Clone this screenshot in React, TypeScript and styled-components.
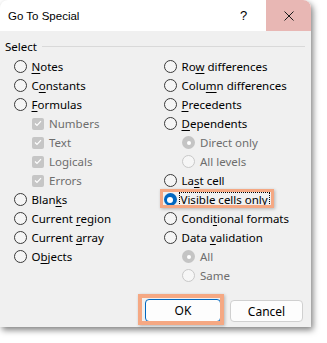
import React from "react";
import styled, { createGlobalStyle, css } from "styled-components";

const GlobalStyle = createGlobalStyle`
  html, body {
    margin: 0;
    padding: 0;
    background: #ffffff;
  }
  body {
    font-family: "Noto Sans", "Liberation Sans", Arial, sans-serif;
    font-size: 11.5px;
    color: #000;
  }
`;

const Page = styled.div`
  width: 327px;
  height: 343px;
  overflow: hidden;
`;

const Frame = styled.div`
  width: 311px;
  height: 327px;
  background: #f0f0f0;
  border-radius: 8px 8px 0 0;
  box-shadow: 2px 3px 6px rgba(0, 0, 0, 0.5);
  display: flex;
  flex-direction: column;
  position: relative;
`;

const TitleBar = styled.div`
  height: 31px;
  background: #ffffff;
  display: flex;
  align-items: stretch;
  border-radius: 8px 8px 0 0;
  flex-shrink: 0;
`;

const Title = styled.div`
  flex: 1;
  display: flex;
  align-items: center;
  padding-left: 8px;
  font-family: "Liberation Sans", Arial, sans-serif;
  font-size: 11.5px;
`;

const TitleButton = styled.div<{ $close?: boolean }>`
  width: 45px;
  display: flex;
  align-items: center;
  justify-content: center;
  font-family: "Liberation Sans", Arial, sans-serif;
  font-size: 13px;
  ${(p) =>
    p.$close &&
    css`
      background: #e8b7b4;
      border-top-right-radius: 8px;
    `}
`;

const Body = styled.div`
  flex: 1;
  display: flex;
  flex-direction: column;
  padding: 8px 6px 5px 5px;
`;

const GroupHeader = styled.div`
  height: 14px;
  display: flex;
  align-items: center;
  gap: 5px;
`;

const GroupLine = styled.div`
  flex: 1;
  height: 1px;
  background: #d9d9d9;
`;

const Columns = styled.div`
  margin-top: 4px;
  padding-left: 8.5px;
  display: grid;
  grid-template-columns: 150px 1fr;
`;

const Column = styled.div`
  display: flex;
  flex-direction: column;
`;

const Row = styled.div<{ $indent?: number }>`
  height: 19px;
  display: flex;
  align-items: center;
  gap: 5px;
  padding-left: ${(p) => p.$indent ?? 0}px;
`;

type RadioState = "off" | "on" | "disabledOn" | "disabledOff";

const RadioCircle = styled.span<{ $state: RadioState }>`
  box-sizing: border-box;
  width: 13px;
  height: 13px;
  border-radius: 50%;
  flex-shrink: 0;
  position: relative;
  ${(p) => {
    switch (p.$state) {
      case "on":
        return css`
          background: #0067c0;
          &::after {
            content: "";
            position: absolute;
            left: 3.5px;
            top: 3.5px;
            width: 6px;
            height: 6px;
            border-radius: 50%;
            background: #fff;
          }
        `;
      case "disabledOn":
        return css`
          background: #c4c4c4;
          &::after {
            content: "";
            position: absolute;
            left: 4.5px;
            top: 4.5px;
            width: 4px;
            height: 4px;
            border-radius: 50%;
            background: #fff;
          }
        `;
      case "disabledOff":
        return css`
          background: #f6f6f6;
          border: 1px solid #c8c8c8;
        `;
      default:
        return css`
          background: #f5f5f5;
          border: 1px solid #3a3a3a;
        `;
    }
  }}
`;

const CheckBox = styled.span`
  width: 12px;
  height: 12px;
  border-radius: 2px;
  background: #c6c6c6;
  flex-shrink: 0;
  display: flex;
  align-items: center;
  justify-content: center;
`;

const Label = styled.span<{ $disabled?: boolean; $focus?: boolean }>`
  white-space: nowrap;
  color: ${(p) => (p.$disabled ? "#6d6d6d" : "#000")};
  line-height: 14px;
  ${(p) =>
    p.$focus &&
    css`
      outline: 1px dotted #000;
      padding: 0 1px;
      margin-left: -2px;
    `}
  u {
    text-decoration-thickness: 1px;
    text-underline-offset: 2px;
  }
`;

const Highlight = styled.div`
  position: relative;
  display: inline-flex;
  align-items: center;
  gap: 5px;
  &::after {
    content: "";
    position: absolute;
    left: -4px;
    right: -5px;
    top: -3.5px;
    bottom: -1.5px;
    border: 3px solid #f5a883;
    box-shadow: 1px 1px 3px rgba(0, 0, 0, 0.25);
    pointer-events: none;
  }
`;

const Footer = styled.div`
  margin-top: auto;
  display: flex;
  justify-content: flex-end;
  align-items: flex-end;
  gap: 9px;
  padding-right: 2px;
`;

const Button = styled.div<{ $primary?: boolean }>`
  box-sizing: border-box;
  height: 22px;
  border-radius: 4px;
  background: #fdfdfd;
  display: flex;
  align-items: center;
  justify-content: center;
  font-size: 12px;
  position: relative;
  ${(p) =>
    p.$primary
      ? css`
          width: 76px;
          height: 23px;
          border: 1px solid #0067c0;
          &::after {
            content: "";
            position: absolute;
            left: -8px;
            right: -4px;
            top: -6px;
            bottom: -4px;
            border: 4px solid #f5a883;
            box-shadow: 1px 1px 3px rgba(0, 0, 0, 0.25);
            pointer-events: none;
          }
        `
      : css`
          width: 73px;
          border: 1px solid #d0d0d0;
        `}
`;

function Check() {
  return (
    <svg width="8" height="7" viewBox="0 0 8 7">
      <path d="M1 3.5 L3 5.5 L7 1.2" fill="none" stroke="#fff" strokeWidth="1.2" />
    </svg>
  );
}

function CloseIcon() {
  return (
    <svg width="10" height="10" viewBox="0 0 10 10">
      <path d="M0.5 0.5 L9.5 9.5 M9.5 0.5 L0.5 9.5" stroke="#1a1a1a" strokeWidth="1" />
    </svg>
  );
}

type Item = {
  kind: "radio" | "check";
  text: React.ReactNode;
  state?: RadioState;
  indent?: number;
  disabled?: boolean;
};

const leftItems: Item[] = [
  { kind: "radio", text: <><u>N</u>otes</> },
  { kind: "radio", text: <>C<u>o</u>nstants</> },
  { kind: "radio", text: <><u>F</u>ormulas</> },
  { kind: "check", text: "Numbers", indent: 18.5, disabled: true },
  { kind: "check", text: "Text", indent: 18.5, disabled: true },
  { kind: "check", text: "Logicals", indent: 18.5, disabled: true },
  { kind: "check", text: "Errors", indent: 18.5, disabled: true },
  { kind: "radio", text: <>Blan<u>k</u>s</> },
  { kind: "radio", text: <>Current <u>r</u>egion</> },
  { kind: "radio", text: <>Current <u>a</u>rray</> },
  { kind: "radio", text: <>O<u>b</u>jects</> },
];

const rightItems: Item[] = [
  { kind: "radio", text: <>Ro<u>w</u> differences</> },
  { kind: "radio", text: <>Colu<u>m</u>n differences</> },
  { kind: "radio", text: <><u>P</u>recedents</> },
  { kind: "radio", text: <><u>D</u>ependents</> },
  { kind: "radio", text: "Direct only", state: "disabledOn", indent: 18.5, disabled: true },
  { kind: "radio", text: "All levels", state: "disabledOff", indent: 18.5, disabled: true },
  { kind: "radio", text: <>La<u>s</u>t cell</> },
  { kind: "radio", text: <>Visible cells onl<u>y</u></>, state: "on" },
  { kind: "radio", text: <>Condi<u>t</u>ional formats</> },
  { kind: "radio", text: <>Data <u>v</u>alidation</> },
  { kind: "radio", text: "All", state: "disabledOn", indent: 18.5, disabled: true },
  { kind: "radio", text: "Same", state: "disabledOff", indent: 18.5, disabled: true },
];

function OptionRow({ item }: { item: Item }) {
  const marker =
    item.kind === "check" ? (
      <CheckBox>
        <Check />
      </CheckBox>
    ) : (
      <RadioCircle $state={item.state ?? "off"} />
    );

  if (item.state === "on") {
    return (
      <Row>
        <Highlight>
          {marker}
          <Label $focus>{item.text}</Label>
        </Highlight>
      </Row>
    );
  }

  return (
    <Row $indent={item.indent}>
      {marker}
      <Label $disabled={item.disabled}>{item.text}</Label>
    </Row>
  );
}

export default function App() {
  return (
    <Page>
      <GlobalStyle />
      <Frame>
        <TitleBar>
          <Title>Go To Special</Title>
          <TitleButton>?</TitleButton>
          <TitleButton $close>
            <CloseIcon />
          </TitleButton>
        </TitleBar>
        <Body>
          <GroupHeader>
            <span>Select</span>
            <GroupLine />
          </GroupHeader>
          <Columns>
            <Column>
              {leftItems.map((item, i) => (
                <OptionRow key={i} item={item} />
              ))}
            </Column>
            <Column>
              {rightItems.map((item, i) => (
                <OptionRow key={i} item={item} />
              ))}
            </Column>
          </Columns>
          <Footer>
            <Button $primary>OK</Button>
            <Button>Cancel</Button>
          </Footer>
        </Body>
      </Frame>
    </Page>
  );
}
